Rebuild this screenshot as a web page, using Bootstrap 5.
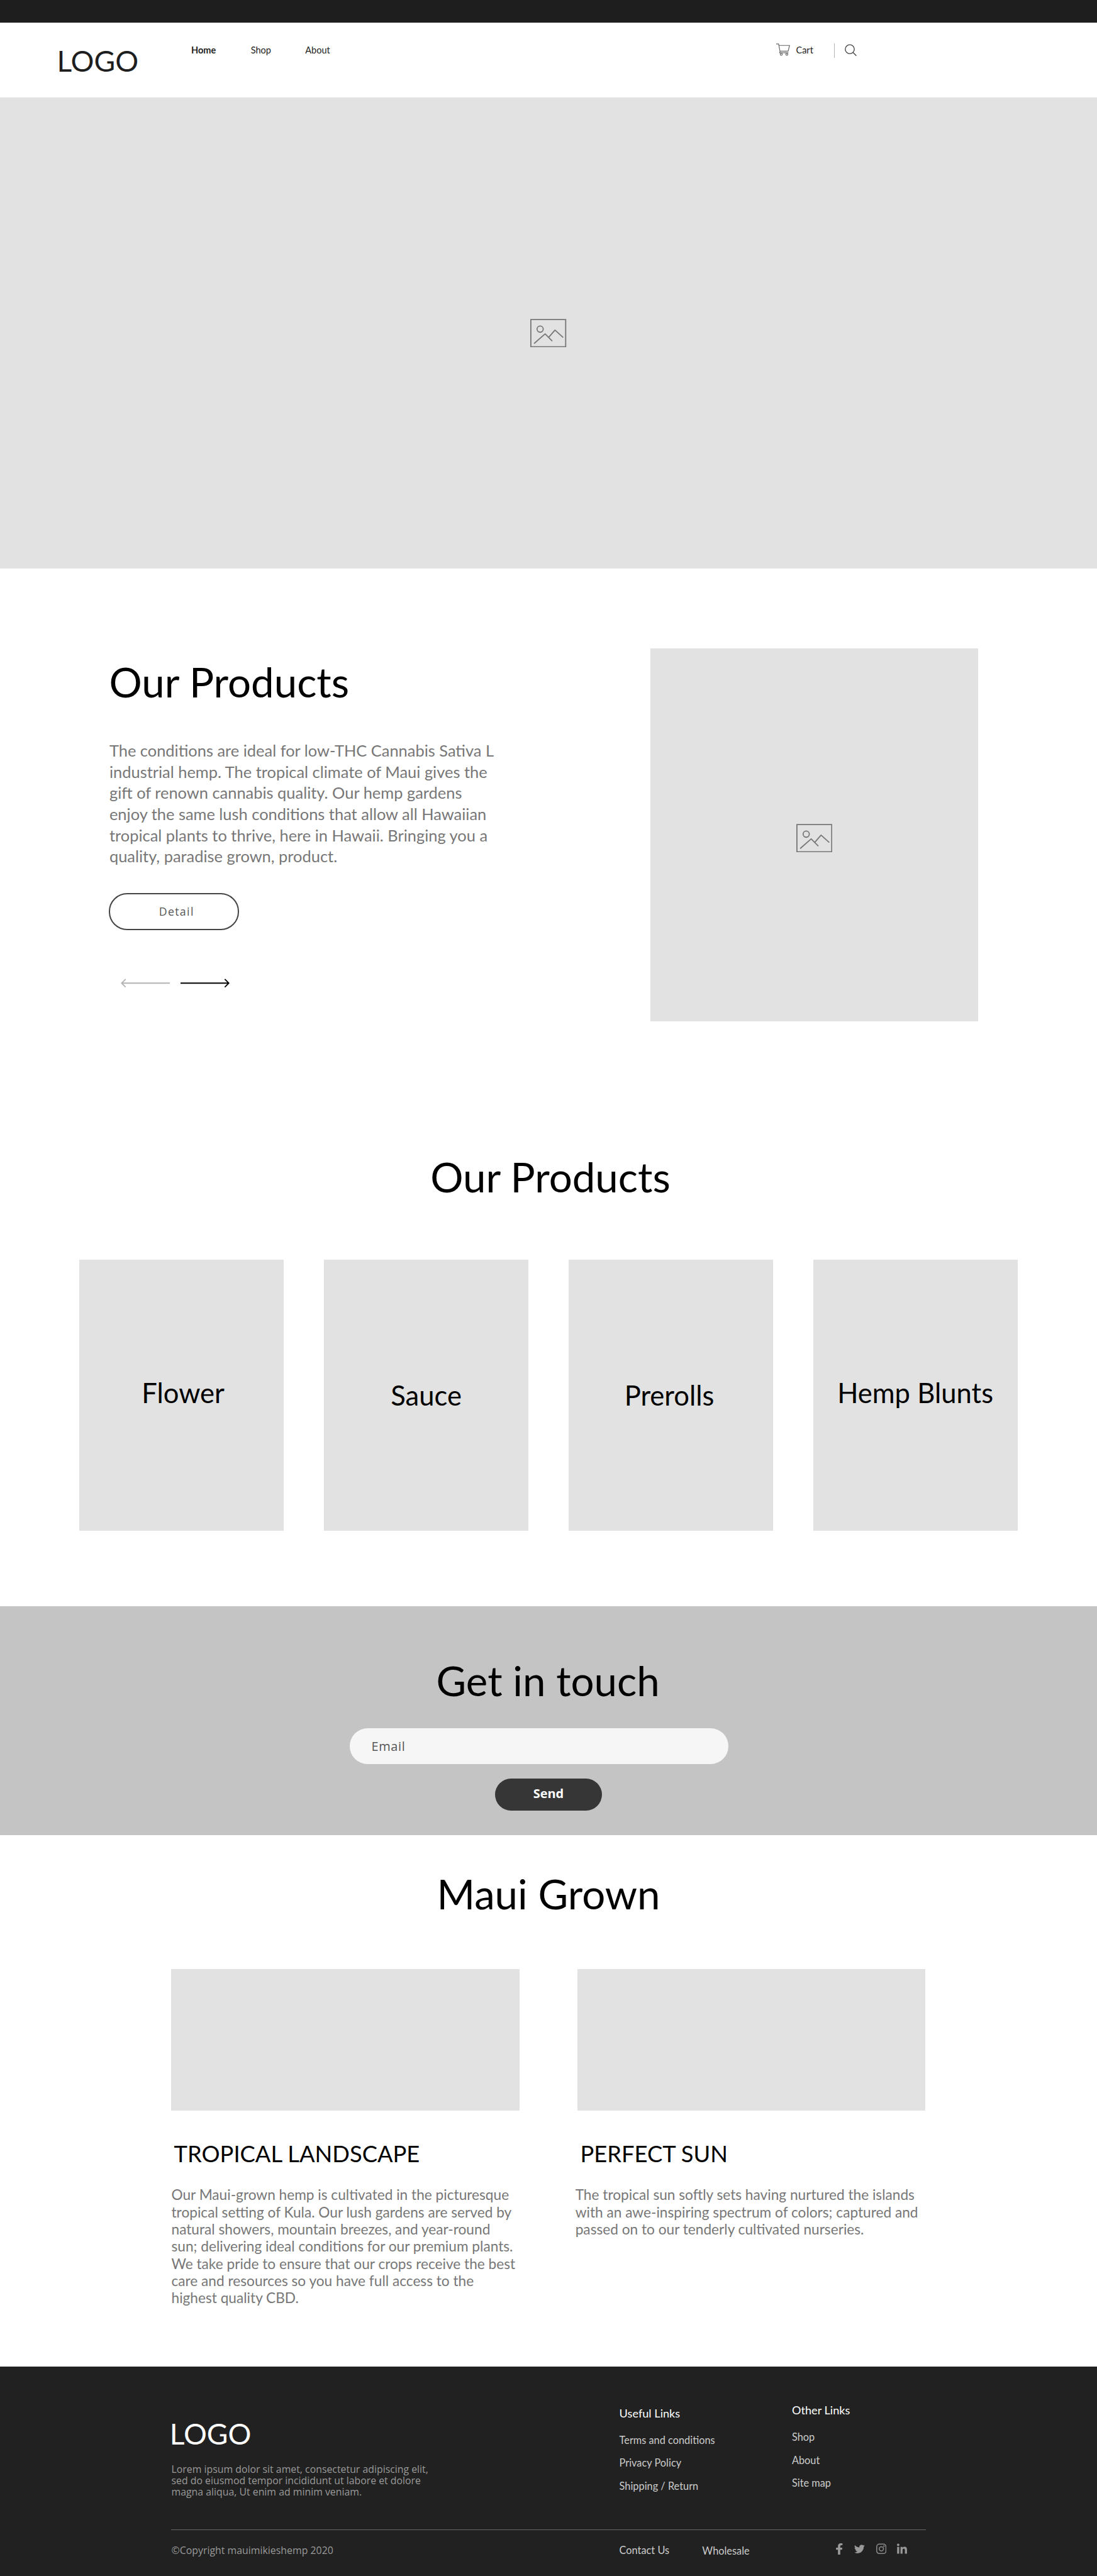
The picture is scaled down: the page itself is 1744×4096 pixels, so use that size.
<!DOCTYPE html>
<html lang="en">
<head>
<meta charset="utf-8">
<meta name="viewport" content="width=device-width, initial-scale=1">
<title>Maui hemp shop</title>
<link rel="stylesheet" href="https://cdn.jsdelivr.net/npm/bootstrap@5.3.0/dist/css/bootstrap.min.css">
<style>
html{font-size:9.08333px}
body{font-family:Lato,sans-serif;font-size:1.6rem;line-height:1.25;color:#1e1e1e;background:#fff;overflow-x:hidden}
a{color:inherit;text-decoration:none}
svg{display:block;flex:none}
.topbar{height:4rem;background:#1e1e1e}
.site-head{height:13.1rem;padding-left:9.96rem}
.brand{width:23.5rem;font-size:5.08rem;line-height:6rem;margin-top:3.6rem}
.menu{margin-top:3.86rem;line-height:2rem}
.m-home{width:10.44rem}.m-shop{width:9.53rem}.m-about{width:82.47rem}
.tools{margin-top:3.6rem}
.tools .t-cart{width:6.65rem;margin-left:1.02rem;line-height:2rem;margin-top:.26rem}
.sep{width:1px;height:2.5rem;background:#b5b5b5;margin-right:1.8rem}
.ph{background:#e2e2e2}
.hero{height:82.4rem}
.pic{width:6.3rem;height:5rem;stroke:#777;fill:none;stroke-width:2}
.title-xl{font-size:7.2rem;line-height:8.6rem;font-weight:400;color:#000;margin:0;white-space:nowrap}
.feature{height:98.3rem;padding-left:19.1rem}
.feature-text{width:94.7rem;padding-top:15.5rem}
.feature-copy{font-size:2.8rem;line-height:3.706rem;color:#777;margin:5.99rem 0 0 .05rem;white-space:nowrap}
.btn-detail{width:22.75rem;height:6.5rem;border:2px solid #444;border-radius:3.2rem;margin-top:4.47rem;padding:0 0 0 8.5rem;font-family:"Open Sans",sans-serif;font-size:1.95rem;letter-spacing:.15rem;line-height:6.1rem;color:#555;text-align:left}
.arrows{margin:8.57rem 0 0 2rem;gap:1.9rem}
.feature-pic{width:57.4rem;height:65.3rem;margin-top:14rem;padding-top:1.1rem}
.products{height:83.4rem;padding-top:3.9rem}
.products .title-xl{padding-left:.65rem}
.tiles{margin-top:10.2rem;padding:0 13.9rem;gap:7rem}
.tile{width:35.8rem;height:47.5rem;padding-top:20.36rem;font-size:4.8rem;line-height:5.8rem;color:#000;white-space:nowrap}
.tile.low{padding-top:20.86rem}
.tile.nudge{padding-left:.5rem}
.tile.back{padding-right:.5rem}
.touch{height:40.1rem;background:#c4c4c4;padding-top:8.62rem}
.touch .title-xl{padding-right:.2rem}
.field{width:66.3rem;height:6.3rem;border:0;border-radius:3.15rem;background:#f6f6f6;margin:4.08rem 0 0 61.2rem;padding:0 3.8rem;font-family:"Open Sans",sans-serif;font-size:2.2rem;letter-spacing:.07rem}
.field::placeholder{color:#555;opacity:1}
.btn-send{width:18.8rem;height:5.7rem;border:0;border-radius:2.85rem;background:#363636;color:#fff;margin:2.5rem 0 0 86.6rem;padding:0 0 .3rem;font-family:"Open Sans",sans-serif;font-weight:700;font-size:2.2rem;line-height:1}
.grown{height:93rem;padding-top:5.85rem}
.grown-row{margin-top:8.95rem;padding-left:30rem;gap:10.2rem}
.grown-col{width:60.9rem}
.grown-img{height:24.8rem}
.grown-col h3{font-size:4rem;line-height:4.8rem;font-weight:400;color:#000;margin:5.2rem 0 0 .45rem;white-space:nowrap}
.grown-col p{font-size:2.495rem;line-height:3.007rem;color:#777;margin:3.22rem 0 0;white-space:nowrap}
.grown-col+.grown-col p{margin-left:-.4rem}
.foot{height:36.6rem;background:#212121;color:#ccc;padding:0 30rem}
.foot-main{height:28.5rem}
.foot-about{width:78.4rem;flex:none;padding-top:8.7rem}
.foot-logo{font-size:5.08rem;line-height:6rem;color:#fff;margin-left:-.3rem}
.mul{font-family:"Open Sans",sans-serif;color:#9a9a9a}
.foot-about p{font-size:1.745rem;line-height:1.98rem;margin:2.23rem 0 0;white-space:nowrap}
.foot-links{width:30.2rem;flex:none;padding-top:7.02rem;white-space:nowrap}
.foot-links.high{padding-top:6.52rem}
.foot-links h4{font-size:2rem;line-height:2.4rem;font-weight:400;color:#fff;margin:0 0 1.45rem}
.foot-links li{font-size:1.8rem;line-height:4rem}
.foot-end{border-top:1px solid #666;height:8.1rem;font-size:1.8rem;line-height:2.4rem;padding-top:2.33rem;white-space:nowrap}
.foot-end .copy{width:78.4rem;font-size:1.75rem;padding-top:.08rem}
.foot-end .contact{width:14.5rem}
.foot-end .whole{width:23.46rem;padding-top:.1rem}
.social{fill:#999}
.social svg{height:2rem}
</style>
</head>
<body>
<div class="topbar"></div>
<header class="site-head d-flex align-items-start">
  <a class="brand" href="#">LOGO</a>
  <nav class="menu d-flex"><a class="m-home fw-bold" href="#">Home</a><a class="m-shop" href="#">Shop</a><a class="m-about" href="#">About</a></nav>
  <div class="tools d-flex">
    <svg style="width:2.4rem;height:2.2rem" viewBox="0 0 24 22" fill="none" stroke="#666" stroke-width="1.3"><path d="M0 1h4.2L6.6 13.6h14.3L23.4 3.6H4.9M6.8 13.6l-.9 2.8h15.4"/><circle cx="8.9" cy="19" r="1.8"/><circle cx="18.6" cy="19" r="1.8"/></svg>
    <a class="t-cart" href="#">Cart</a>
    <span class="sep"></span>
    <svg style="width:2.1rem;height:2.2rem" viewBox="0 0 21 22" fill="none" stroke="#444" stroke-width="1.5"><circle cx="8.8" cy="10.2" r="7.9"/><path d="M14.3 15.8l6 6"/></svg>
  </div>
</header>
<div class="hero ph d-flex align-items-center justify-content-center">
  <svg class="pic" viewBox="0 0 63 50"><path d="M1 1.2h61v47.6H1z"/><g stroke-linecap="round" stroke-linejoin="round"><circle cx="17.3" cy="18" r="5.4"/><path d="M7.3 42.7L26 26.3l12 12M32.5 32l10.8-12.3L57 32"/></g></svg>
</div>
<section class="feature d-flex align-items-start">
  <div class="feature-text">
    <h2 class="title-xl">Our Products</h2>
    <p class="feature-copy">The conditions are ideal for low-THC Cannabis Sativa L<br>industrial hemp. The tropical climate of Maui gives the<br>gift of renown cannabis quality. Our hemp gardens<br>enjoy the same lush conditions that allow all Hawaiian<br>tropical plants to thrive, here in Hawaii. Bringing you a<br>quality, paradise grown, product.</p>
    <a class="btn btn-detail d-block" href="#">Detail</a>
    <div class="arrows d-flex">
      <svg style="width:8.6rem;height:1.6rem" viewBox="0 0 86 16" fill="none" stroke="#b3b3b3" stroke-width="2"><path d="M86 8H1M8.5 1L1.5 8l7 7"/></svg>
      <svg style="width:8.6rem;height:1.6rem" viewBox="0 0 86 16" fill="none" stroke="#000" stroke-width="2"><path d="M0 8h85M77.5 1l7 7-7 7"/></svg>
    </div>
  </div>
  <div class="feature-pic ph d-flex align-items-center justify-content-center">
    <svg class="pic" viewBox="0 0 63 50"><path d="M1 1.2h61v47.6H1z"/><g stroke-linecap="round" stroke-linejoin="round"><circle cx="17.3" cy="18" r="5.4"/><path d="M7.3 42.7L26 26.3l12 12M32.5 32l10.8-12.3L57 32"/></g></svg>
  </div>
</section>
<section class="products">
  <h2 class="title-xl text-center">Our Products</h2>
  <div class="tiles d-flex text-center">
    <div class="tile ph nudge">Flower</div>
    <div class="tile ph low">Sauce</div>
    <div class="tile ph low back">Prerolls</div>
    <div class="tile ph">Hemp Blunts</div>
  </div>
</section>
<section class="touch">
  <h2 class="title-xl text-center">Get in touch</h2>
  <input class="field d-block" type="email" placeholder="Email">
  <button class="btn btn-send d-block">Send</button>
</section>
<section class="grown">
  <h2 class="title-xl text-center">Maui Grown</h2>
  <div class="grown-row d-flex">
    <div class="grown-col">
      <div class="grown-img ph"></div>
      <h3>TROPICAL LANDSCAPE</h3>
      <p>Our Maui-grown hemp is cultivated in the picturesque<br>tropical setting of Kula. Our lush gardens are served by<br>natural showers, mountain breezes, and year-round<br>sun; delivering ideal conditions for our premium plants.<br>We take pride to ensure that our crops receive the best<br>care and resources so you have full access to the<br>highest quality CBD.</p>
    </div>
    <div class="grown-col">
      <div class="grown-img ph"></div>
      <h3>PERFECT SUN</h3>
      <p>The tropical sun softly sets having nurtured the islands<br>with an awe-inspiring spectrum of colors; captured and<br>passed on to our tenderly cultivated nurseries.</p>
    </div>
  </div>
</section>
<footer class="foot">
  <div class="foot-main d-flex">
    <div class="foot-about">
      <div class="foot-logo">LOGO</div>
      <p class="mul">Lorem ipsum dolor sit amet, consectetur adipiscing elit,<br>sed do eiusmod tempor incididunt ut labore et dolore<br>magna aliqua, Ut enim ad minim veniam.</p>
    </div>
    <div class="foot-links"><h4>Useful Links</h4><ul class="list-unstyled m-0"><li>Terms and conditions</li><li>Privacy Policy</li><li>Shipping / Return</li></ul></div>
    <div class="foot-links high"><h4>Other Links</h4><ul class="list-unstyled m-0"><li>Shop</li><li>About</li><li>Site map</li></ul></div>
  </div>
  <div class="foot-end d-flex align-items-start">
    <span class="mul copy flex-shrink-0">©Copyright mauimikieshemp 2020</span><span class="contact flex-shrink-0">Contact Us</span><span class="whole flex-shrink-0">Wholesale</span>
    <div class="social d-flex">
      <svg style="width:1.15rem;margin-right:2rem" viewBox="20 0 280 512" preserveAspectRatio="none"><path d="M279.14 288l14.22-92.66h-88.91v-60.13c0-25.35 12.42-50.06 52.24-50.06h40.42V6.26S260.43 0 225.36 0c-73.22 0-121.08 44.38-121.08 124.72v70.62H22.89V288h81.39v224h100.17V288z"/></svg>
      <svg style="width:1.85rem;margin-right:1.95rem" viewBox="0 0 16 17"><path d="M5.026 15c6.038 0 9.341-5.003 9.341-9.334 0-.14 0-.282-.006-.422A6.685 6.685 0 0 0 16 3.542a6.658 6.658 0 0 1-1.889.518 3.301 3.301 0 0 0 1.447-1.817 6.533 6.533 0 0 1-2.087.793A3.286 3.286 0 0 0 7.875 6.03a9.325 9.325 0 0 1-6.767-3.429 3.289 3.289 0 0 0 1.018 4.382A3.323 3.323 0 0 1 .64 6.575v.045a3.288 3.288 0 0 0 2.632 3.218 3.203 3.203 0 0 1-.865.115 3.23 3.23 0 0 1-.614-.057 3.283 3.283 0 0 0 3.067 2.277A6.588 6.588 0 0 1 .78 13.58a6.32 6.32 0 0 1-.78-.045A9.344 9.344 0 0 0 5.026 15z"/></svg>
      <svg style="width:1.8rem;margin-right:1.85rem" viewBox="0 0 18 20" fill="none" stroke="#8c8c8c" stroke-width="1.7"><rect x=".9" y="1.4" width="16.2" height="16.6" rx="4.6"/><circle cx="9" cy="9.7" r="3.7"/><circle cx="13.6" cy="5" r=".5"/></svg>
      <svg style="width:1.75rem" viewBox="0 -15 448 510"><path d="M100.28 448H7.4V148.9h92.88zM53.79 108.1C24.09 108.1 0 83.5 0 53.8a53.79 53.79 0 0 1 107.58 0c0 29.7-24.1 54.3-53.79 54.3zM447.9 448h-92.68V302.4c0-34.7-.7-79.2-48.29-79.2-48.29 0-55.69 37.7-55.69 76.7V448h-92.78V148.9h89.08v40.8h1.3c12.4-23.5 42.69-48.3 87.88-48.3 94 0 111.28 61.9 111.28 142.3V448z"/></svg>
    </div>
  </div>
</footer>
<script src="https://cdn.jsdelivr.net/npm/bootstrap@5.3.0/dist/js/bootstrap.bundle.min.js"></script>
</body>
</html>
